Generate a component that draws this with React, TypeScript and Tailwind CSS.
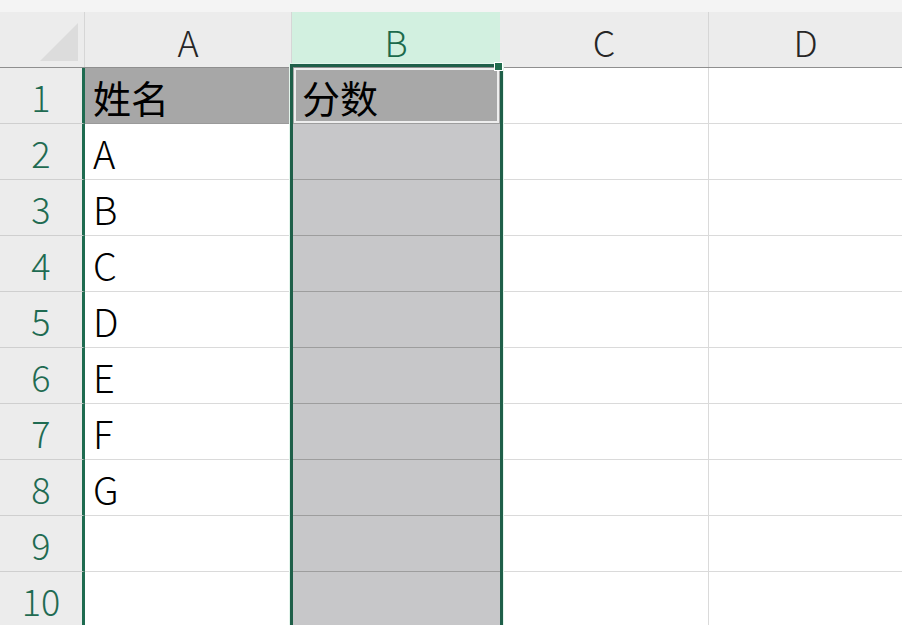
import React from 'react';

// one row of the sheet: the name in column A, column B left empty
interface SheetRow {
    num: number;
    a: string;
    b: string;
}

const ROWS: SheetRow[] = [
    { num: 1, a: '姓名', b: '分数' },
    { num: 2, a: 'A', b: '' },
    { num: 3, a: 'B', b: '' },
    { num: 4, a: 'C', b: '' },
    { num: 5, a: 'D', b: '' },
    { num: 6, a: 'E', b: '' },
    { num: 7, a: 'F', b: '' },
    { num: 8, a: 'G', b: '' },
    { num: 9, a: '', b: '' },
    { num: 10, a: '', b: '' },
];

const FONT = "font-['Noto_Sans_CJK_SC','Noto_Sans',sans-serif]";

export default function App() {
    return (
        <div className={`relative w-[902px] h-[625px] overflow-hidden bg-white ${FONT}`}>
            {/* thin strip above the column headers */}
            <div className="h-[12px] bg-[#f4f4f4]" />

            {/* column headers */}
            <div className="flex h-[56px] bg-[#ececec] border-b border-[#8f8f8f]">
                <div className="w-[85px] shrink-0 border-r border-[#d6d6d6] flex items-end justify-end pr-[6px] pb-[6px]">
                    <svg width="38" height="38" viewBox="0 0 38 38">
                        <polygon points="38,0 38,38 0,38" fill="#dcdcdc" />
                    </svg>
                </div>
                <div className="w-[207px] shrink-0 border-r border-[#d6d6d6] flex items-center justify-center pt-[2px] text-[36px] font-light text-[#262626]">
                    A
                </div>
                <div className="w-[208px] shrink-0 bg-[#d2f0e0] flex items-center justify-center pt-[2px] text-[36px] font-light text-[#1c6a4c]">
                    B
                </div>
                <div className="w-[209px] shrink-0 border-r border-[#d6d6d6] flex items-center justify-center pt-[2px] text-[36px] font-light text-[#262626]">
                    C
                </div>
                <div className="flex-1 flex items-center justify-center pt-[2px] text-[36px] font-light text-[#262626]">
                    D
                </div>
            </div>

            {/* rows */}
            {ROWS.map((row) => {
                const head = row.num === 1;
                return (
                    <div key={row.num} className="flex h-[56px]">
                        <div className="w-[85px] shrink-0 bg-[#ececec] border-b border-[#cfcfcf] border-r-[3px] border-r-[#1e6b50] flex items-center justify-center text-[36px] font-light text-[#1f6b52]">
                            {row.num}
                        </div>
                        <div
                            className={`w-[207px] shrink-0 border-b border-r flex items-center pl-[8px] pt-[2px] text-[38px] text-black ${
                                head ? 'bg-[#a7a7a7] border-[#9a9a9a]' : 'bg-white border-[#dadada] font-light'
                            }`}
                        >
                            {row.a}
                        </div>
                        <div
                            className={`w-[208px] shrink-0 border-b border-[#9d9d9d] flex items-center pl-[10px] pt-[2px] text-[38px] text-black ${
                                head ? 'bg-[#a8a8a8]' : 'bg-[#c7c7c9]'
                            }`}
                        >
                            {row.b}
                        </div>
                        <div className="w-[209px] shrink-0 border-b border-r border-[#dadada]" />
                        <div className="flex-1 border-b border-[#dadada]" />
                    </div>
                );
            })}

            {/* selection frame around column B */}
            <div className="absolute left-[290px] top-[64px] w-[213px] h-[600px] border-[3px] border-[#1f5f49] outline outline-1 outline-[#e3f5ec]">
                <div className="absolute left-[1px] right-[1px] top-[1px] h-[55px] border-2 border-[#eeeeee]" />
            </div>
            <div className="absolute left-[494px] top-[62px] w-[9px] h-[9px] bg-[#1f6b4c] border border-white" />
        </div>
    );
}
